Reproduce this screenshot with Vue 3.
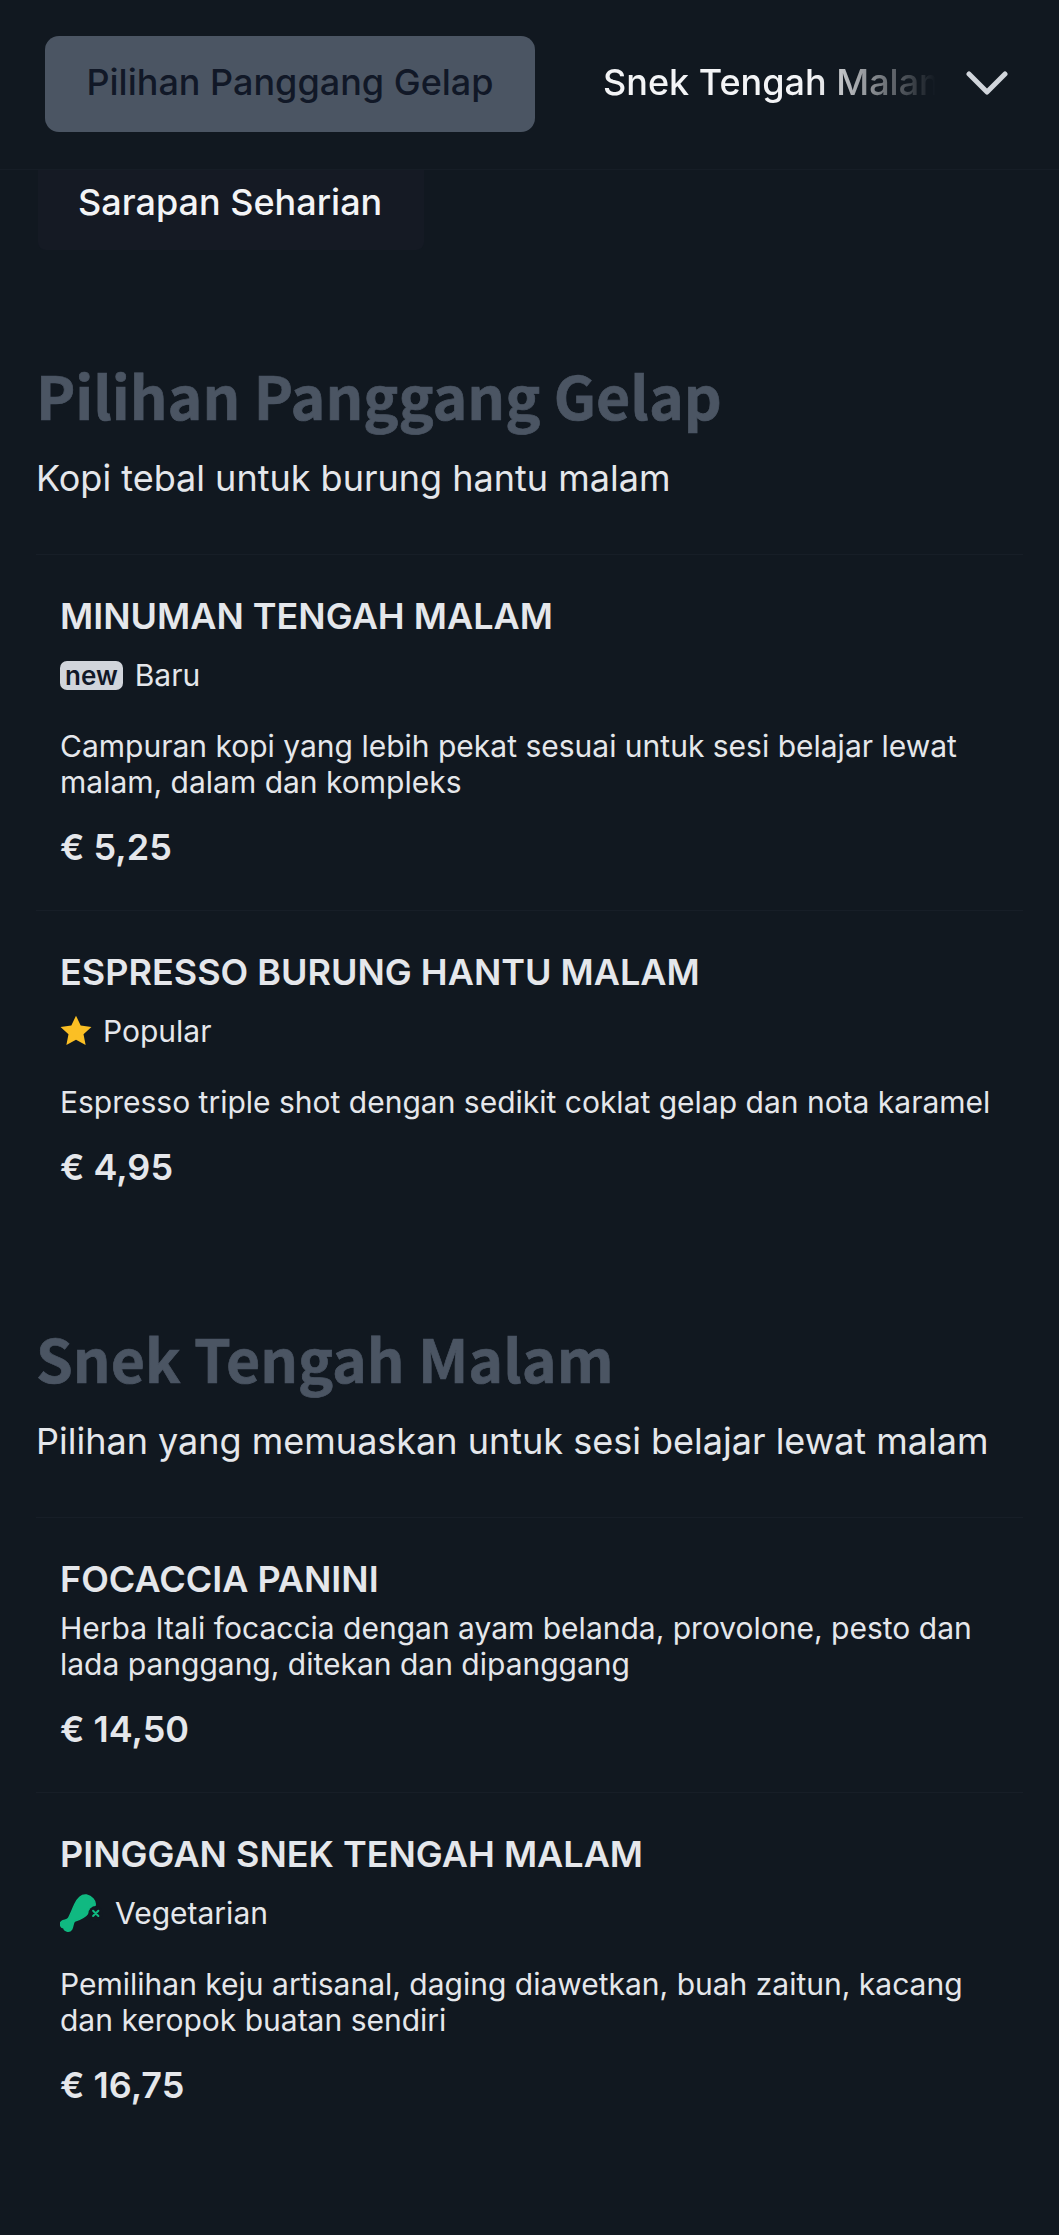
<script setup>
const sections = [
  {
    title: "Pilihan Panggang Gelap",
    subtitle: "Kopi tebal untuk burung hantu malam",
    items: [
      {
        name: "MINUMAN TENGAH MALAM",
        tag: "new",
        label: "Baru",
        desc: "Campuran kopi yang lebih pekat sesuai untuk sesi belajar lewat malam, dalam dan kompleks",
        price: "€ 5,25",
      },
      {
        name: "ESPRESSO BURUNG HANTU MALAM",
        tag: "star",
        label: "Popular",
        desc: "Espresso triple shot dengan sedikit coklat gelap dan nota karamel",
        price: "€ 4,95",
      },
    ],
  },
  {
    title: "Snek Tengah Malam",
    subtitle: "Pilihan yang memuaskan untuk sesi belajar lewat malam",
    items: [
      {
        name: "FOCACCIA PANINI",
        desc: "Herba Itali focaccia dengan ayam belanda, provolone, pesto dan lada panggang, ditekan dan dipanggang",
        price: "€ 14,50",
      },
      {
        name: "PINGGAN SNEK TENGAH MALAM",
        tag: "veg",
        label: "Vegetarian",
        desc: "Pemilihan keju artisanal, daging diawetkan, buah zaitun, kacang dan keropok buatan sendiri",
        price: "€ 16,75",
      },
    ],
  },
];
</script>

<template>
  <div class="page">
    <header class="topbar">
      <button class="tab active">Pilihan Panggang Gelap</button>
      <button class="tab fade">Snek Tengah Malam</button>
      <svg class="chevron" viewBox="0 0 42 26" width="42" height="26">
        <path d="M3 4 L21 22 L39 4" fill="none" stroke="#d1d5db" stroke-width="5" stroke-linecap="round" stroke-linejoin="round" />
      </svg>
      <div class="dropdown">Sarapan Seharian</div>
    </header>

    <main class="content">
      <section v-for="s in sections" :key="s.title" class="section">
        <h2 class="title">{{ s.title }}</h2>
        <p class="subtitle">{{ s.subtitle }}</p>
        <div class="list">
          <article v-for="item in s.items" :key="item.name" class="item">
            <h3 class="name">{{ item.name }}</h3>
            <div v-if="item.tag" class="tagrow">
              <span v-if="item.tag === 'new'" class="newbadge">new</span>
              <svg v-else-if="item.tag === 'star'" class="star" viewBox="0 0 24 24" width="34" height="34">
                <path d="M12 1.2l3.3 7 7.6.9-5.6 5.2 1.5 7.6L12 18.2l-6.8 3.7 1.5-7.6L1.1 9.1l7.6-.9z" fill="#fbbf24" />
              </svg>
              <svg v-else class="veg" viewBox="60 40 130 115" width="43" height="39">
                <path d="M140 42C155 45 168 58 166 72C160 85 150 80 145 95C135 110 120 115 105 120C98 125 100 135 95 145C88 155 72 150 72 140C62 142 58 128 65 122C72 116 80 120 86 112C92 100 98 85 105 70C112 55 125 40 140 42Z" fill="#10b981" stroke="#10b981" stroke-width="5" stroke-linejoin="round" />
                <circle cx="168" cy="97" r="22" fill="#111820" />
                <path d="M160 89l16 16M176 89l-16 16" stroke="#10b981" stroke-width="6" stroke-linecap="round" />
              </svg>
              <span class="label">{{ item.label }}</span>
            </div>
            <p class="desc">{{ item.desc }}</p>
            <div class="price">{{ item.price }}</div>
          </article>
        </div>
      </section>
    </main>
  </div>
</template>

<style>
body {
  margin: 0;
  background: #111820;
}
</style>

<style scoped>
.page {
  width: 1059px;
  height: 2235px;
  overflow: hidden;
  background: #111820;
  font-family: Inter, "Liberation Sans", sans-serif;
  color: #e5e7eb;
}

.topbar {
  position: relative;
  height: 170px;
  box-sizing: border-box;
  padding: 36px 0 0 45px;
  display: flex;
  align-items: flex-start;
  border-bottom: 1px solid #161d26;
}

.tab {
  flex: 0 0 auto;
  height: 96px;
  border: none;
  border-radius: 14px;
  background: transparent;
  font-family: inherit;
  font-size: 36px;
  font-weight: 500;
  padding: 0 0 4px;
  color: #f3f4f6;
  white-space: nowrap;
}
.tab.active {
  width: 490px;
  background: #4b5563;
  color: #111827;
}
.tab.fade {
  width: 379px;
  margin-left: 22px;
  padding-left: 46px;
  text-align: left;
  overflow: hidden;
  -webkit-mask-image: linear-gradient(to right, #000 68%, transparent 100%);
  mask-image: linear-gradient(to right, #000 68%, transparent 100%);
}

.chevron {
  margin: 34px 0 0 30px;
}

.dropdown {
  position: absolute;
  left: 38px;
  top: 170px;
  width: 386px;
  height: 80px;
  box-sizing: border-box;
  padding-left: 40px;
  line-height: 65px;
  font-size: 36px;
  font-weight: 500;
  color: #f3f4f6;
  background: #151a24;
  border-radius: 0 0 8px 8px;
}

.content {
  padding: 0 36px;
}

.section {
  padding-top: 183px;
}
.section + .section {
  padding-top: 86px;
}

.title {
  margin: 0;
  font-family: "Noto Sans CJK SC", "Noto Sans", sans-serif;
  font-size: 59px;
  font-weight: 700;
  line-height: 84px;
  color: #4b5563;
  -webkit-text-stroke: 0.7px #4b5563;
}

.subtitle {
  margin: 16px 0 0;
  font-size: 36px;
  line-height: 50px;
  color: #e5e7eb;
}

.list {
  margin-top: 51px;
}

.item {
  padding: 39px 24px 41px;
  border-top: 1px solid #171e27;
}

.name {
  margin: 0;
  font-size: 36px;
  line-height: 44px;
  font-weight: 600;
  color: #e5e7eb;
}

.tagrow {
  display: flex;
  align-items: center;
  gap: 12px;
  height: 44px;
  margin: 15px 0 31px;
}

.newbadge {
  font-size: 26px;
  line-height: 29px;
  font-weight: 600;
  padding: 0 5px;
  border-radius: 7px;
  background: #d1d5db;
  color: #111827;
}

.star {
  margin: 0 -2px 0 -1px;
}

.label {
  font-size: 30px;
  color: #e5e7eb;
}

.desc {
  margin: 9px 0 0;
  font-size: 30px;
  line-height: 36px;
  color: #e5e7eb;
}

.price {
  margin-top: 25px;
  font-size: 36px;
  line-height: 44px;
  font-weight: 600;
  color: #e5e7eb;
}
</style>
